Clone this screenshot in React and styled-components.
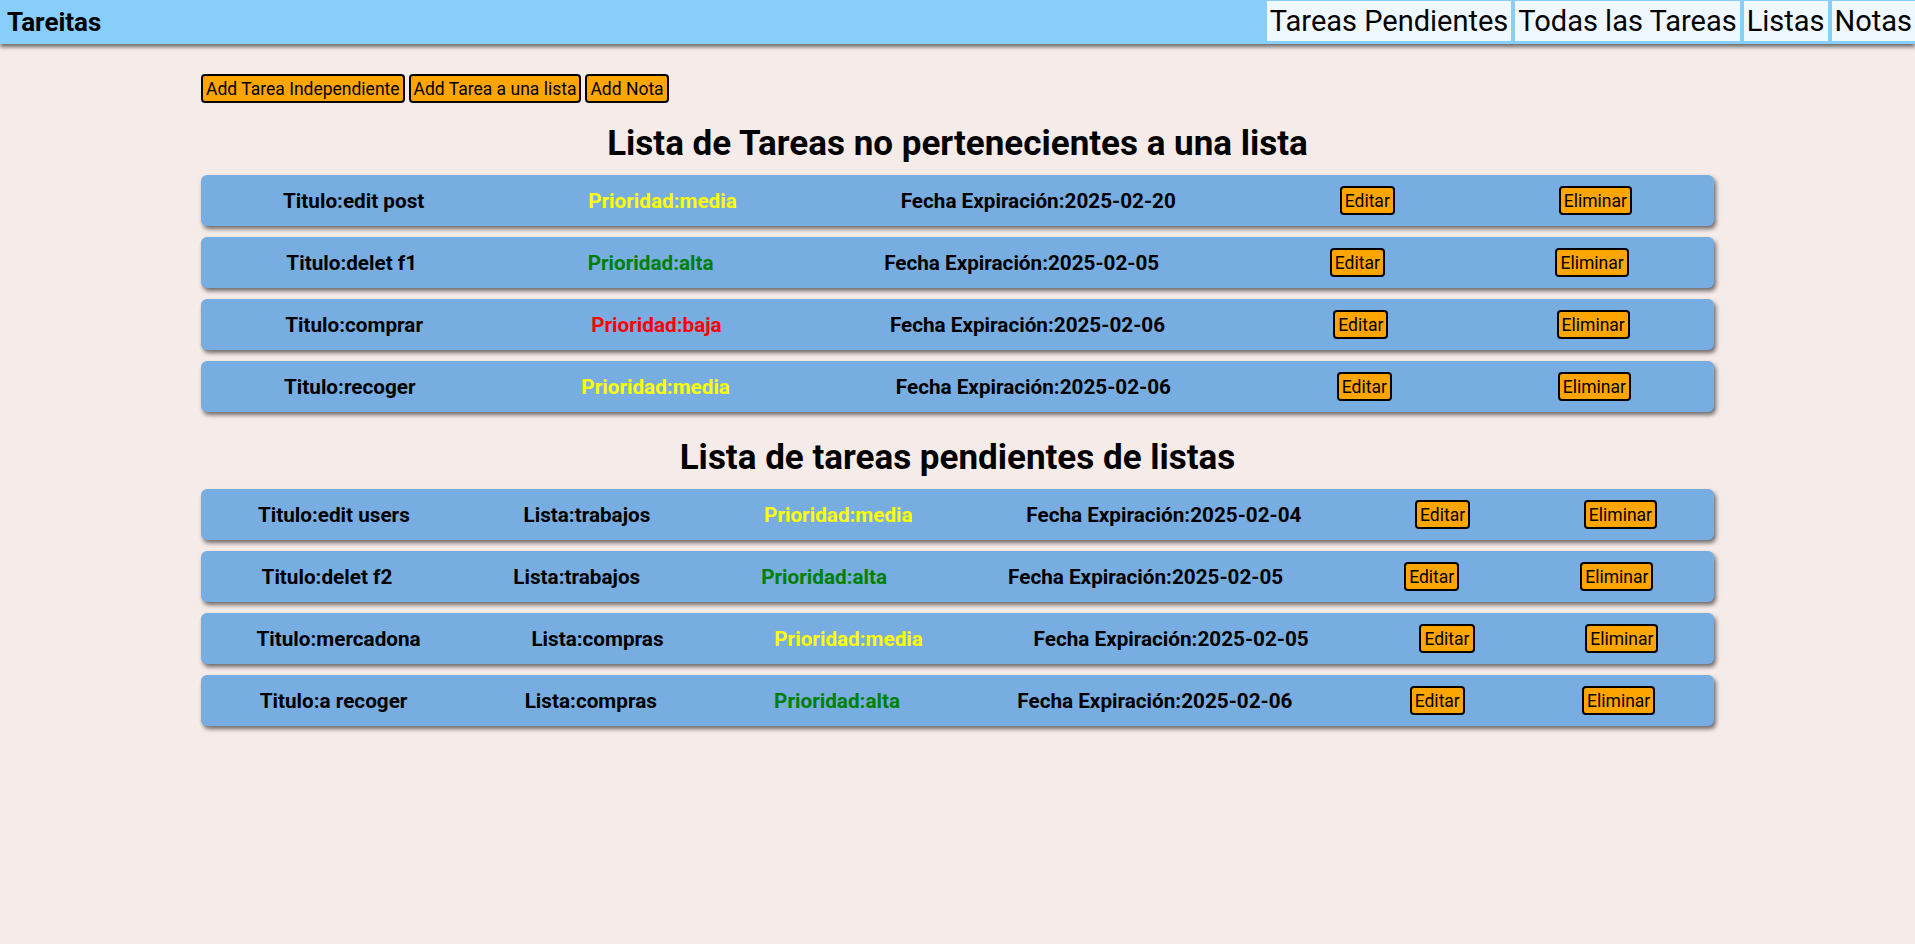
import React from "react";
import styled, { createGlobalStyle } from "styled-components";

const GlobalStyle = createGlobalStyle`
  body {
    margin: 0;
    background: #f5ebe9;
    font-family: Roboto, "Liberation Sans", sans-serif;
    color: #000;
  }
`;

const Header = styled.header`
  height: 44px;
  background: #87cefa;
  display: flex;
  align-items: center;
  justify-content: space-between;
  box-shadow: 0 3px 4px rgba(0, 0, 0, 0.55);
`;

const Brand = styled.div`
  font-size: 26px;
  font-weight: 700;
  padding-left: 7px;
`;

const Nav = styled.nav`
  display: flex;
  align-self: flex-start;
  gap: 4px;
  padding-top: 1px;
`;

const NavLink = styled.a`
  display: block;
  height: 40px;
  line-height: 40px;
  padding: 0 3px;
  background: #f0f8ff;
  font-size: 29px;
  color: #000;
  text-decoration: none;
`;

const Main = styled.main`
  width: 79%;
  margin: 0 auto;
  padding: 30px 0 12px;
`;

const Toolbar = styled.div`
  display: flex;
  gap: 4px;
`;

const Button = styled.button`
  height: 29px;
  padding: 0 3px;
  background: #ffa500;
  border: 2px solid #000;
  border-radius: 4px;
  font-family: Roboto, "Liberation Sans", sans-serif;
  font-size: 17.5px;
  color: #000;
`;

const Section = styled.section`
  & + & {
    padding-top: 5px;
  }
`;

const Title = styled.h1`
  font-size: 35px;
  font-weight: 700;
  text-align: center;
  margin: 20px 0 11px;
`;

const Row = styled.div`
  height: 51px;
  display: flex;
  align-items: center;
  justify-content: space-around;
  background: #77ade0;
  border-radius: 6px;
  box-shadow: 2px 3px 4px rgba(0, 0, 0, 0.55);

  & + & {
    margin-top: 11px;
  }
`;

const Field = styled.span`
  font-size: 20.7px;
  font-weight: 700;
  color: ${(p) => p.color || "#000"};
`;

const priorityColor = { media: "#ffff00", alta: "#008000", baja: "#ff0000" };

const freeTasks = [
  { titulo: "edit post", prioridad: "media", fecha: "2025-02-20" },
  { titulo: "delet f1", prioridad: "alta", fecha: "2025-02-05" },
  { titulo: "comprar", prioridad: "baja", fecha: "2025-02-06" },
  { titulo: "recoger", prioridad: "media", fecha: "2025-02-06" },
];

const listTasks = [
  { titulo: "edit users", lista: "trabajos", prioridad: "media", fecha: "2025-02-04" },
  { titulo: "delet f2", lista: "trabajos", prioridad: "alta", fecha: "2025-02-05" },
  { titulo: "mercadona", lista: "compras", prioridad: "media", fecha: "2025-02-05" },
  { titulo: "a recoger", lista: "compras", prioridad: "alta", fecha: "2025-02-06" },
];

const TaskRow = ({ task }) => (
  <Row>
    <Field>Titulo:{task.titulo}</Field>
    {task.lista && <Field>Lista:{task.lista}</Field>}
    <Field color={priorityColor[task.prioridad]}>Prioridad:{task.prioridad}</Field>
    <Field>Fecha Expiración:{task.fecha}</Field>
    <Button>Editar</Button>
    <Button>Eliminar</Button>
  </Row>
);

export default function App() {
  return (
    <>
      <GlobalStyle />
      <Header>
        <Brand>Tareitas</Brand>
        <Nav>
          <NavLink href="#">Tareas Pendientes</NavLink>
          <NavLink href="#">Todas las Tareas</NavLink>
          <NavLink href="#">Listas</NavLink>
          <NavLink href="#">Notas</NavLink>
        </Nav>
      </Header>
      <Main>
        <Toolbar>
          <Button>Add Tarea Independiente</Button>
          <Button>Add Tarea a una lista</Button>
          <Button>Add Nota</Button>
        </Toolbar>
        <Section>
          <Title>Lista de Tareas no pertenecientes a una lista</Title>
          {freeTasks.map((t) => (
            <TaskRow key={t.titulo} task={t} />
          ))}
        </Section>
        <Section>
          <Title>Lista de tareas pendientes de listas</Title>
          {listTasks.map((t) => (
            <TaskRow key={t.titulo} task={t} />
          ))}
        </Section>
      </Main>
    </>
  );
}
